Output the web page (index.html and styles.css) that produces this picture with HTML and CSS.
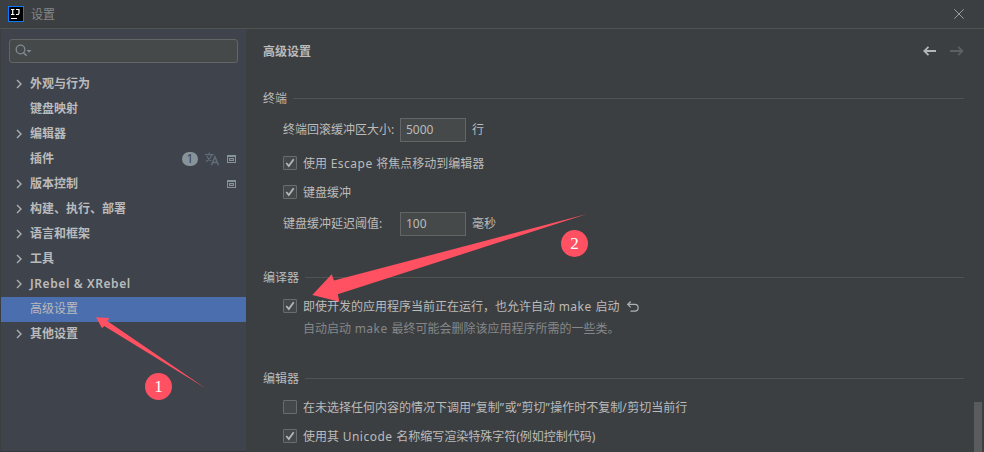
FILE: index.html
```html
<!DOCTYPE html>
<html lang="zh-CN">
<head>
<meta charset="utf-8">
<title>设置</title>
<link rel="stylesheet" href="styles.css">
</head>
<body>
<div class="window">
  <header class="titlebar">
    <svg class="logo" width="16" height="16" viewBox="0 0 16 16"><rect x=".5" y=".5" width="15" height="15" fill="#000" stroke="#087cfa"/><path d="M3 3.5h3.4M4.7 3.5v5M3 8.5h3.4M8 3.5h3v3.4q0 1.6-1.6 1.6H8" fill="none" stroke="#fff" stroke-width="1.2"/><path d="M3 12.5h6" stroke="#fff"/></svg>
    <span class="caption">设置</span>
    <svg class="close" width="10" height="10" viewBox="0 0 10 10"><path d="M.3.3l9.4 9.4M9.7.3L.3 9.7" stroke="#9c9ea0"/></svg>
  </header>
  <div class="content">
    <nav class="sidebar">
      <div class="search"><svg width="18" height="14" viewBox="0 0 18 14"><circle cx="5.5" cy="5.5" r="4.3" fill="none" stroke="#7f8b91" stroke-width="1.3"/><path d="M8.5 8.7l3.2 3.1" stroke="#7f8b91" stroke-width="1.6"/><path d="M11.5 6h5L14 8.8z" fill="#7f8b91"/></svg></div>
      <ul class="tree">
        <li><svg class="chev" viewBox="0 0 6 10"><path d="M1 1l4 4-4 4"/></svg>外观与行为</li>
        <li><i class="chev"></i>键盘映射</li>
        <li><svg class="chev" viewBox="0 0 6 10"><path d="M1 1l4 4-4 4"/></svg>编辑器</li>
        <li><i class="chev"></i>插件
          <span class="marks"><span class="count">1</span>
            <svg width="14" height="14" viewBox="0 0 14 14" fill="none" stroke="#626c76" stroke-width="1.3"><path d="M0 2.6h8.7M4.3.6v2M6.9 2.6Q5.3 7.3.8 9.6M1.9 4.2Q3.4 7.6 6.3 9"/><path d="M6.4 13.2L9.9 5l3.6 8.2M7.6 10.6h4.7" stroke-width="1.5"/></svg>
            <svg class="panel" viewBox="0 0 9 8"><path d="M0 0h9v8H0zM1 2v5h7V2z" fill="#87939a" fill-rule="evenodd"/><path d="M2 3h5v3H2z" fill="#87939a"/><path d="M3 4h3v1H3z" fill="#4a515a"/></svg></span></li>
        <li><svg class="chev" viewBox="0 0 6 10"><path d="M1 1l4 4-4 4"/></svg>版本控制
          <span class="marks"><svg class="panel" viewBox="0 0 9 8"><path d="M0 0h9v8H0zM1 2v5h7V2z" fill="#87939a" fill-rule="evenodd"/><path d="M2 3h5v3H2z" fill="#87939a"/><path d="M3 4h3v1H3z" fill="#4a515a"/></svg></span></li>
        <li><svg class="chev" viewBox="0 0 6 10"><path d="M1 1l4 4-4 4"/></svg>构建、执行、部署</li>
        <li><svg class="chev" viewBox="0 0 6 10"><path d="M1 1l4 4-4 4"/></svg>语言和框架</li>
        <li><svg class="chev" viewBox="0 0 6 10"><path d="M1 1l4 4-4 4"/></svg>工具</li>
        <li class="latin"><svg class="chev" viewBox="0 0 6 10"><path d="M1 1l4 4-4 4"/></svg>JRebel &amp; XRebel</li>
        <li class="selected"><i class="chev"></i>高级设置</li>
        <li><svg class="chev" viewBox="0 0 6 10"><path d="M1 1l4 4-4 4"/></svg>其他设置</li>
      </ul>
    </nav>
    <main class="main">
      <div class="heading"><h1>高级设置</h1>
        <svg class="history" width="41" height="10" viewBox="0 0 41 10" fill="none" stroke-width="1.8"><path d="M13 5H1.5M5.5.8L1.3 5l4.2 4.2" stroke="#b4b6b7"/><path d="M27 5h12M35.2.8L39.4 5l-4.2 4.2" stroke="#5d5f61"/></svg>
      </div>
      <h2 class="group">终端</h2>
      <div class="field first"><label>终端回滚缓冲区大小:</label><span class="input">5000</span><span>行</span></div>
      <div class="check escape"><span class="box"><svg viewBox="0 0 12 12"><path d="M2.3 6l2.5 3L9.7 2.3"/></svg></span>使用<span class="word">&nbsp;Escape&nbsp;</span>将焦点移动到编辑器</div>
      <div class="check"><span class="box"><svg viewBox="0 0 12 12"><path d="M2.3 6l2.5 3L9.7 2.3"/></svg></span>键盘缓冲</div>
      <div class="field"><label>键盘缓冲延迟阈值:</label><span class="input">100</span><span>毫秒</span></div>
      <h2 class="group compiler">编译器</h2>
      <div class="check lead"><span class="box"><svg viewBox="0 0 12 12"><path d="M2.3 6l2.5 3L9.7 2.3"/></svg></span>即使开发的应用程序当前正在运行，也允许自动<span class="word">&nbsp;make&nbsp;</span>启动<svg class="undo" width="12" height="11" viewBox="0 0 12 11"><path d="M3.7.5L.8 3.4l2.9 2.9M1 3.4h6.8a3.2 3.2 0 010 6.7H3.5" fill="none" stroke="#afb1b3" stroke-width="1.2"/></svg></div>
      <p class="note">自动启动<span class="word">&nbsp;make&nbsp;</span>最终可能会删除该应用程序所需的一些类。</p>
      <h2 class="group editor">编辑器</h2>
      <div class="check lead"><span class="box"></span>在未选择任何内容的情况下调用<span class="word">“</span>复制<span class="word">”</span>或<span class="word">“</span>剪切<span class="word">”</span>操作时不复制<span class="word">/</span>剪切当前行</div>
      <div class="check"><span class="box"><svg viewBox="0 0 12 12"><path d="M2.3 6l2.5 3L9.7 2.3"/></svg></span>使用其<span class="word">&nbsp;Unicode&nbsp;</span>名称缩写渲染特殊字符(例如控制代码)</div>
    </main>
    <div class="scroll"><div class="thumb"></div></div>
  </div>
  <svg class="callouts" width="984" height="452" viewBox="0 0 984 452">
    <path d="M96 317.3L109.3 318L107.3 321L206 388.5L104.2 326L102 328.3Z"/>
    <path d="M312.3 295L331.7 274.3L334 280.6L587 214L337.7 294.3L339.5 301.7Z"/>
    <circle cx="158.5" cy="386.5" r="13.5"/><circle cx="574.5" cy="243.5" r="13.5"/>
    <text x="158.5" y="392">1</text><text x="574.5" y="249">2</text>
  </svg>
</div>
</body>
</html>
```
FILE: styles.css
```css
* { box-sizing: border-box; }
body { margin: 0; background: #3c3f41; color: #bbb; font: 12px/20px "Noto Sans", "Noto Sans CJK SC", sans-serif; }
.window { position: relative; width: 984px; height: 452px; overflow: hidden; display: flex; flex-direction: column; }
.titlebar { height: 29px; flex: none; display: flex; align-items: center; padding: 0 20px 0 8px; border-bottom: 1px solid #515353; }
.caption { margin: 2px 0 0 7px; color: #85878a; }
.close { margin-left: auto; }
.content { flex: 1; display: flex; min-height: 0; }
.sidebar { width: 246px; flex: none; background: #3e434c; border-left: 1px solid #3c3f41; border-bottom: 1px solid #36393b; padding-top: 10px; }
.search { width: 229px; height: 24px; margin-left: 8px; border: 1px solid #646566; border-radius: 3px; background: #45494a; display: flex; align-items: center; padding-left: 5px; }
.tree { list-style: none; margin: 9px 0 0; padding: 0; font-weight: 700; }
.tree li { height: 25px; display: flex; align-items: center; padding: 0 10px 2px 15px; }
.tree .selected { background: #4b6eaf; font-weight: 400; }
.tree .latin { font-weight: 600; letter-spacing: .6px; }
.chev { width: 6px; height: 10px; margin-right: 8px; flex: none; fill: none; stroke: #adb0b3; stroke-width: 1.4; }
.marks { margin-left: auto; display: flex; align-items: center; }
.count { width: 16px; height: 14px; margin-right: 7px; border-radius: 7px; background: #87939a; color: #3e434c; font-weight: 400; line-height: 14px; text-align: center; }
.panel { width: 9px; height: 8px; margin-left: 8px; }
.main { flex: 1; padding-left: 17px; }
.heading { height: 45px; display: flex; align-items: center; justify-content: space-between; }
.history { margin-top: -1px; }
h1 { margin: 1px 0 0; font-size: 12px; font-weight: 700; }
.group { height: 21px; margin: 14px 0 0; font-size: 12px; font-weight: 400; display: flex; align-items: center; gap: 6px; }
.group::after { content: ""; flex: 1; height: 1px; background: #515353; }
.compiler { margin-top: 31px; }
.editor { margin-top: 29px; }
.field { height: 24px; margin-top: 10px; padding-left: 20px; display: flex; align-items: center; }
.field.first { margin-top: 9px; }
.field label { width: 117px; white-space: nowrap; }
.input { width: 66px; height: 24px; margin-right: 6px; border: 1px solid #646566; background: #45494a; padding-left: 5px; line-height: 22px; }
.check { height: 20px; margin-top: 9px; padding: 2px 0 0 20px; display: flex; align-items: center; white-space: nowrap; }
.check.escape { margin-top: 11px; }
.check.lead { margin-top: 8px; }
.word { letter-spacing: .5px; }
.box { width: 14px; height: 14px; margin: -2px 6px 0 0; flex: none; border: 1px solid #6b6b6b; border-radius: 1px; background: #43494a; display: flex; }
.box svg { width: 12px; height: 12px; fill: none; stroke: #b4b6b7; stroke-width: 1.8; }
.undo { margin: -2px 0 0 8px; }
.note { margin: 3px 0 0 40px; height: 20px; color: #858789; }
.scroll { width: 20px; flex: none; display: flex; justify-content: flex-end; align-items: flex-end; padding-right: 2px; }
.thumb { width: 8px; height: 50px; background: #595b5d; }
.callouts { position: absolute; left: 0; top: 0; fill: #ff5162; }
.callouts text { fill: #fff; font: 17px "Liberation Serif", serif; text-anchor: middle; }
```
